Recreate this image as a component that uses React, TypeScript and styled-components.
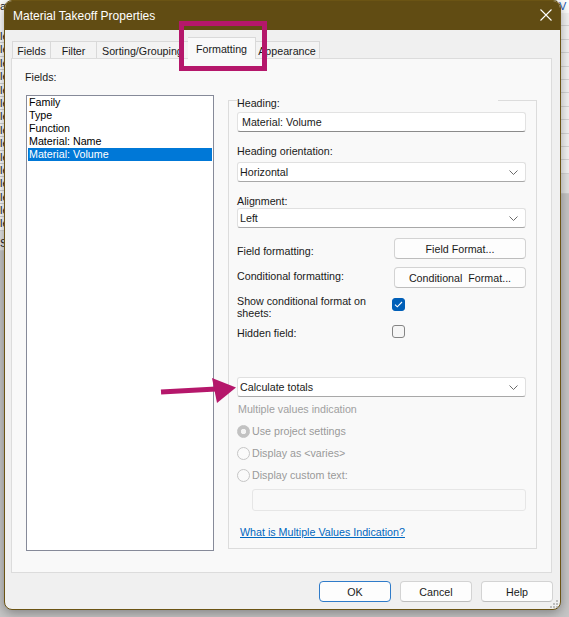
import React from "react";
import styled, { createGlobalStyle } from "styled-components";

const FONT = `"Liberation Sans", Arial, sans-serif`;

const GlobalStyle = createGlobalStyle`
  html, body { margin: 0; padding: 0; background: #c6c6c6; }
  body { font-family: ${FONT}; font-size: 10.7px; color: #1a1a1a; }
  *, *::before, *::after { box-sizing: border-box; }
`;

/* ---------- desktop / background app ---------- */

const Desktop = styled.div`
  position: relative;
  width: 569px;
  height: 617px;
  overflow: hidden;
  background: #c6c6c6;
`;

const Backdrop = styled.div`
  display: flex;
  justify-content: space-between;
  height: 100%;
`;

const Sheet = styled.div<{ $width: number }>`
  width: ${(p) => p.$width}px;
  display: flex;
  flex-direction: column;
  overflow: hidden;
  font-size: 11px;
`;

const SheetHeader = styled.div<{ $height: number; $blue?: boolean }>`
  height: ${(p) => p.$height}px;
  background: #fff;
  color: ${(p) => (p.$blue ? "#1e5bb8" : "#222")};
  line-height: 12px;
  white-space: nowrap;
  padding-left: ${(p) => (p.$blue ? 2 : 0)}px;
`;

const SheetRow = styled.div<{ $tint?: boolean }>`
  height: 13.4px;
  flex: none;
  background: ${(p) => (p.$tint ? "#f4f4f4" : "#fff")};
  border-bottom: 1px solid #d6d6d6;
  line-height: 13px;
  white-space: nowrap;
  color: #222;
`;

const SheetBand = styled.div`
  height: 20px;
  flex: none;
  background: #e4e4e4;
  border-bottom: 1px solid #cdcdcd;
  line-height: 24px;
  color: #222;
`;

/* ---------- dialog ---------- */

const Dialog = styled.div`
  position: absolute;
  z-index: 1;
  left: 4px;
  top: 0;
  width: 557px;
  height: 610px;
  border: 1px solid #6b5414;
  border-radius: 8px;
  background: #f0f0f0;
  box-shadow: 0 3px 12px rgba(0, 0, 0, 0.35);
  display: flex;
  flex-direction: column;
  overflow: hidden;
`;

const TitleBar = styled.div`
  height: 29px;
  flex: none;
  background: #614c13;
  color: #fff;
  font-size: 12px;
  display: flex;
  align-items: center;
  justify-content: space-between;
  padding: 0 8px 0 8px;
`;

const CloseButton = styled.span`
  display: flex;
  width: 12px;
  height: 12px;
  margin-top: -1px;
`;

const Body = styled.div`
  flex: 1;
  display: flex;
  flex-direction: column;
  padding: 7px 8px 7px 6px;
`;

const TabStrip = styled.div`
  height: 22px;
  flex: none;
  display: flex;
  align-items: flex-end;
  padding-left: 1px;
`;

const Tab = styled.div<{ $width: number; $active?: boolean; $left?: boolean }>`
  width: ${(p) => p.$width}px;
  flex: none;
  height: ${(p) => (p.$active ? 22 : 18)}px;
  padding-top: ${(p) => (p.$active ? 5 : 3)}px;
  padding-left: ${(p) => (p.$left ? 5 : 0)}px;
  text-align: ${(p) => (p.$left ? "left" : "center")};
  line-height: 13px;
  white-space: nowrap;
  overflow: hidden;
  background: ${(p) => (p.$active ? "#f9f9f9" : "#f3f3f3")};
  border: 1px solid #d9d9d9;
  border-bottom: ${(p) => (p.$active ? "none" : "1px solid #d9d9d9")};
  margin-left: ${(p) => (p.$active ? -2 : 0)}px;
  margin-right: ${(p) => (p.$active ? -1 : 0)}px;
  position: relative;
  z-index: ${(p) => (p.$active ? 2 : 0)};
  & + & {
    border-left: ${(p) => (p.$active ? "1px solid #d9d9d9" : "none")};
  }
`;

const Panel = styled.div`
  flex: 1;
  margin-top: -1px;
  position: relative;
  z-index: 1;
  background: #f9f9f9;
  border: 1px solid #dcdcdc;
  display: flex;
  padding: 0 0 21px 14px;
`;

const LeftCol = styled.div`
  width: 188px;
  flex: none;
  display: flex;
  flex-direction: column;
`;

const FieldsLabel = styled.div`
  margin: 12px 0 0 -1px;
  line-height: 13px;
`;

const ListBox = styled.div`
  flex: 1;
  margin-top: 11px;
  background: #fff;
  border: 1px solid #868a99;
  padding: 0 1px;
`;

const ListItem = styled.div<{ $selected?: boolean }>`
  height: 13px;
  line-height: 13px;
  padding-left: 1px;
  white-space: nowrap;
  color: ${(p) => (p.$selected ? "#fff" : "#000")};
  background: ${(p) => (p.$selected ? "#0078d7" : "transparent")};
`;

const RightCol = styled.div`
  width: 309px;
  flex: none;
  margin-left: 14px;
  display: flex;
  flex-direction: column;
`;

const GroupBox = styled.fieldset`
  flex: 1;
  margin: 32px 0 2px 0;
  padding: 2px 10px 0 8px;
  min-width: 0;
  border: 1px solid #dcdcdc;
  display: flex;
  flex-direction: column;
`;

const GroupLegend = styled.legend`
  width: 261px;
  padding: 6px 0 0 0;
  line-height: 13px;
`;

const TextInput = styled.div`
  height: 20px;
  flex: none;
  background: #fff;
  border: 1px solid #e2e2e2;
  border-bottom-color: #8b8b8b;
  border-radius: 3px;
  padding-left: 4px;
  line-height: 18px;
  white-space: nowrap;
`;

const Label = styled.div<{ $mt: number }>`
  margin-top: ${(p) => p.$mt}px;
  line-height: 13px;
`;

const Select = styled.div<{ $mt: number }>`
  height: 20px;
  flex: none;
  margin-top: ${(p) => p.$mt}px;
  background: #fff;
  border: 1px solid #e0e0e0;
  border-bottom-color: #a8a8a8;
  border-radius: 3px;
  padding: 0 7px 0 2px;
  display: flex;
  align-items: center;
  justify-content: space-between;
  line-height: 18px;
`;

const FormRow = styled.div<{ $mt: number }>`
  display: grid;
  grid-template-columns: 155px 1fr;
  margin-top: ${(p) => p.$mt}px;
`;

const RowLabel = styled.div<{ $pt: number; $lh?: number }>`
  padding-top: ${(p) => p.$pt}px;
  line-height: ${(p) => p.$lh ?? 13}px;
`;

const PushButton = styled.div<{ $default?: boolean; $width?: number }>`
  width: ${(p) => p.$width ?? 132}px;
  height: 21px;
  flex: none;
  margin-left: ${(p) => (p.$width ? 0 : 2)}px;
  background: #fdfdfd;
  border: 1px solid ${(p) => (p.$default ? "#2f7bc9" : "#d3d3d3")};
  border-bottom-color: ${(p) => (p.$default ? "#2f7bc9" : "#bdbdbd")};
  border-radius: 4px;
  display: flex;
  align-items: center;
  justify-content: center;
  white-space: pre;
  color: #1a1a1a;
`;

const CheckBox = styled.div<{ $checked?: boolean; $mt: number }>`
  width: 13px;
  height: 13px;
  margin-top: ${(p) => p.$mt}px;
  border-radius: 3px;
  background: ${(p) => (p.$checked ? "#005fb8" : "#f6f6f6")};
  border: 1px solid ${(p) => (p.$checked ? "#005fb8" : "#858585")};
  display: flex;
  align-items: center;
  justify-content: center;
`;

const Caption = styled.div`
  margin-top: 6px;
  padding-left: 1px;
  line-height: 13px;
  color: #a0a0a0;
`;

const RadioRow = styled.div<{ $mt: number }>`
  margin-top: ${(p) => p.$mt}px;
  display: flex;
  align-items: center;
  gap: 2px;
  line-height: 13px;
  color: #9a9a9a;
`;

const Radio = styled.span<{ $checked?: boolean }>`
  width: 13px;
  height: 13px;
  flex: none;
  border-radius: 50%;
  border: 1px solid ${(p) => (p.$checked ? "#c2c2c2" : "#c6c6c6")};
  background: ${(p) =>
    p.$checked
      ? "radial-gradient(circle, #f4f4f4 0 2.4px, #c2c2c2 3px)"
      : "#fafafa"};
`;

const DisabledInput = styled.div`
  height: 22px;
  margin: 7px 0 0 15px;
  background: #f9f9f9;
  border: 1px solid #e6e6e6;
  border-radius: 3px;
`;

const HelpLink = styled.a`
  margin-top: 15px;
  padding-left: 3px;
  line-height: 13px;
  color: #0067c0;
  text-decoration: underline;
  white-space: nowrap;
`;

const Footer = styled.div`
  flex: none;
  margin-top: 8px;
  display: flex;
  justify-content: flex-end;
  gap: 9px;
  margin-right: -1px;
`;

const Grip = styled.svg`
  position: absolute;
  right: 2px;
  bottom: 1px;
`;

const Overlay = styled.svg`
  position: absolute;
  z-index: 10;
  left: 0;
  top: 0;
  pointer-events: none;
`;

const Chevron = () => (
  <svg width="9" height="5" viewBox="0 0 9 5">
    <polyline points="0.5,0.5 4.5,4.5 8.5,0.5" fill="none" stroke="#5a5a5a" strokeWidth="0.9" />
  </svg>
);

const fields = ["Family", "Type", "Function", "Material: Name", "Material: Volume"];

export default function App() {
  return (
    <Desktop>
      <GlobalStyle />
      <Backdrop>
        <Sheet $width={12}>
          <SheetHeader $height={30}>ar</SheetHeader>
          {Array.from({ length: 15 }).map((_, i) => (
            <SheetRow key={i}>le</SheetRow>
          ))}
          <SheetBand>S</SheetBand>
        </Sheet>
        <Sheet $width={12}>
          <SheetHeader $height={13} $blue>
            V
          </SheetHeader>
          {Array.from({ length: 12 }).map((_, i) => (
            <SheetRow key={i} $tint />
          ))}
          <SheetBand />
        </Sheet>
      </Backdrop>

      <Dialog>
        <TitleBar>
          <span>Material Takeoff Properties</span>
          <CloseButton>
            <svg width="12" height="12" viewBox="0 0 12 12">
              <path d="M0.5 0.5 L11.5 11.5 M11.5 0.5 L0.5 11.5" stroke="#fff" strokeWidth="1.1" />
            </svg>
          </CloseButton>
        </TitleBar>
        <Body>
          <TabStrip>
            <Tab $width={39}>Fields</Tab>
            <Tab $width={46}>Filter</Tab>
            <Tab $width={93} $left>
              Sorting/Grouping
            </Tab>
            <Tab $width={68} $active>
              Formatting
            </Tab>
            <Tab $width={65}>Appearance</Tab>
          </TabStrip>
          <Panel>
            <LeftCol>
              <FieldsLabel>Fields:</FieldsLabel>
              <ListBox>
                {fields.map((f, i) => (
                  <ListItem key={f} $selected={i === fields.length - 1}>
                    {f}
                  </ListItem>
                ))}
              </ListBox>
            </LeftCol>
            <RightCol>
              <GroupBox>
                <GroupLegend>Heading:</GroupLegend>
                <TextInput>Material: Volume</TextInput>
                <Label $mt={13}>Heading orientation:</Label>
                <Select $mt={4}>
                  <span>Horizontal</span>
                  <Chevron />
                </Select>
                <Label $mt={13}>Alignment:</Label>
                <Select $mt={0}>
                  <span>Left</span>
                  <Chevron />
                </Select>
                <FormRow $mt={10}>
                  <RowLabel $pt={7}>Field formatting:</RowLabel>
                  <PushButton>Field Format...</PushButton>
                </FormRow>
                <FormRow $mt={8}>
                  <RowLabel $pt={3}>Conditional formatting:</RowLabel>
                  <PushButton>{"Conditional  Format..."}</PushButton>
                </FormRow>
                <FormRow $mt={7}>
                  <RowLabel $pt={0} $lh={12}>
                    Show conditional format on sheets:
                  </RowLabel>
                  <CheckBox $checked $mt={3}>
                    <svg width="9" height="7" viewBox="0 0 9 7">
                      <polyline points="1,3.6 3.3,5.8 8,1" fill="none" stroke="#fff" strokeWidth="1.1" />
                    </svg>
                  </CheckBox>
                </FormRow>
                <FormRow $mt={6}>
                  <RowLabel $pt={2}>Hidden field:</RowLabel>
                  <CheckBox $mt={0} />
                </FormRow>
                <Select $mt={37}>
                  <span>Calculate totals</span>
                  <Chevron />
                </Select>
                <Caption>Multiple values indication</Caption>
                <RadioRow $mt={9}>
                  <Radio $checked />
                  <span>Use project settings</span>
                </RadioRow>
                <RadioRow $mt={9}>
                  <Radio />
                  <span>{"Display as <varies>"}</span>
                </RadioRow>
                <RadioRow $mt={9}>
                  <Radio />
                  <span>Display custom text:</span>
                </RadioRow>
                <DisabledInput />
                <HelpLink>What is Multiple Values Indication?</HelpLink>
              </GroupBox>
            </RightCol>
          </Panel>
          <Footer>
            <PushButton $default $width={72}>
              OK
            </PushButton>
            <PushButton $width={72}>Cancel</PushButton>
            <PushButton $width={72}>Help</PushButton>
          </Footer>
        </Body>
        <Grip width="8" height="8" viewBox="0 0 8 8">
          <g fill="#bdbdbd">
            <rect x="6" y="0" width="2" height="2" />
            <rect x="3" y="3" width="2" height="2" />
            <rect x="6" y="3" width="2" height="2" />
            <rect x="0" y="6" width="2" height="2" />
            <rect x="3" y="6" width="2" height="2" />
            <rect x="6" y="6" width="2" height="2" />
          </g>
        </Grip>
      </Dialog>

      <Overlay width="569" height="617" viewBox="0 0 569 617">
        <rect x="181.5" y="23.5" width="83" height="45" fill="none" stroke="#b5176b" strokeWidth="5" />
        <line x1="161" y1="392" x2="216" y2="389" stroke="#b5176b" strokeWidth="5" />
        <polygon points="212,378 236,387.5 217,403" fill="#b5176b" />
      </Overlay>
    </Desktop>
  );
}
